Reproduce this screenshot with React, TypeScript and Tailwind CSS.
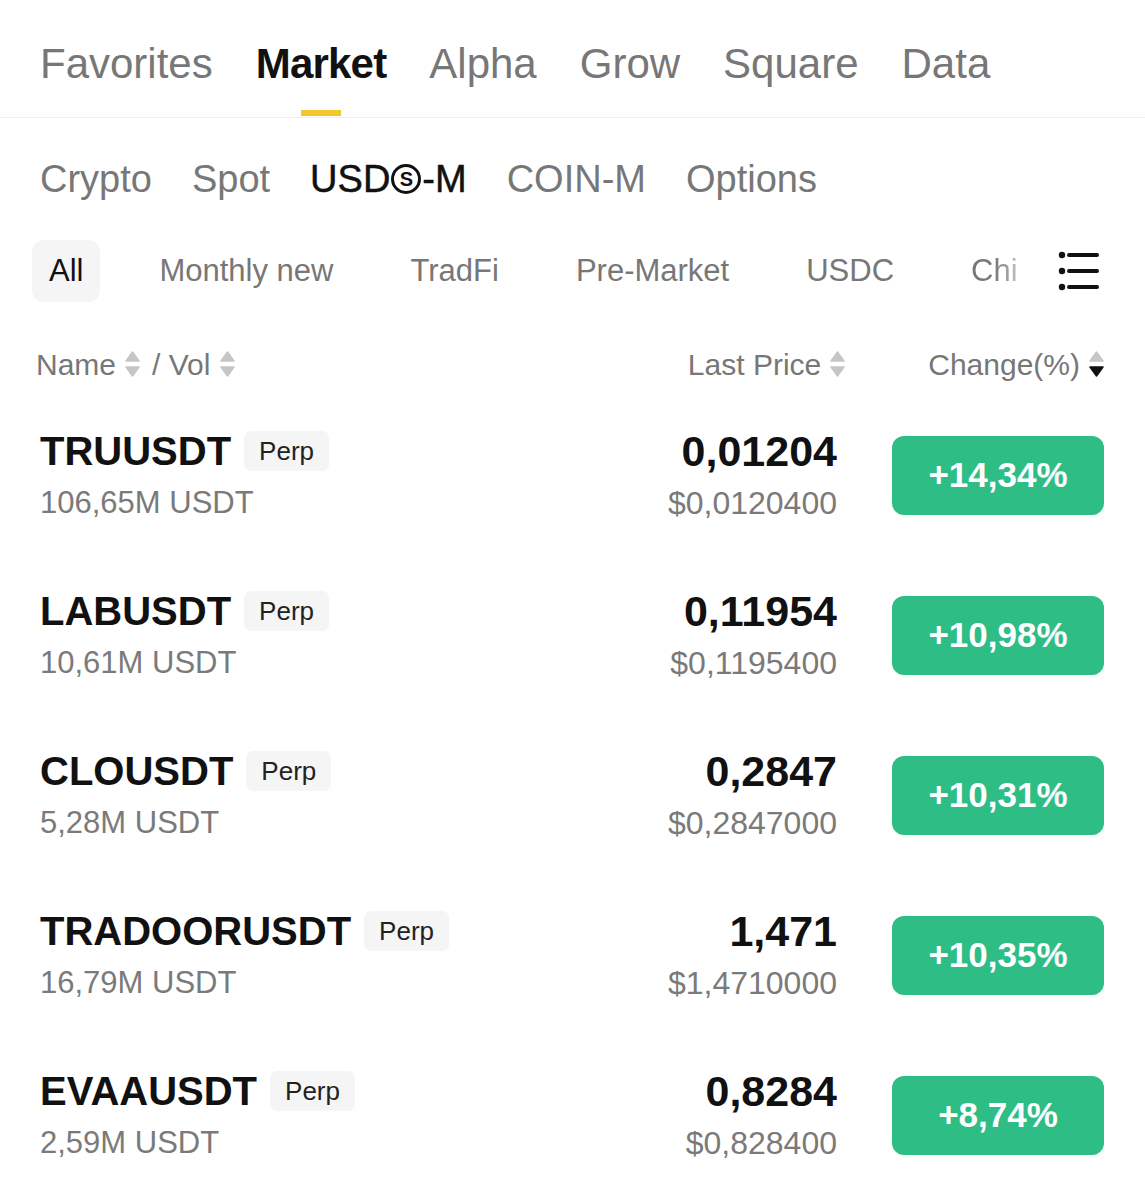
import React from 'react';

const topTabs = ['Favorites', 'Market', 'Alpha', 'Grow', 'Square', 'Data'];
const filters = ['Monthly new', 'TradFi', 'Pre-Market', 'USDC'];

const rows = [
  { name: 'TRUUSDT', vol: '106,65M USDT', price: '0,01204', usd: '$0,0120400', change: '+14,34%' },
  { name: 'LABUSDT', vol: '10,61M USDT', price: '0,11954', usd: '$0,1195400', change: '+10,98%' },
  { name: 'CLOUSDT', vol: '5,28M USDT', price: '0,2847', usd: '$0,2847000', change: '+10,31%' },
  { name: 'TRADOORUSDT', vol: '16,79M USDT', price: '1,471', usd: '$1,4710000', change: '+10,35%' },
  { name: 'EVAAUSDT', vol: '2,59M USDT', price: '0,8284', usd: '$0,828400', change: '+8,74%' },
];

function SortIcon({ down = false }: { down?: boolean }) {
  return (
    <svg width="15" height="26" viewBox="0 0 15 26" className="shrink-0">
      <path d="M7.5 1 L14 10 L1 10 Z" fill="#c6c6c6" stroke="#c6c6c6" strokeWidth="1.5" strokeLinejoin="round" />
      <path d="M1 16 L14 16 L7.5 25 Z" fill={down ? '#111' : '#c6c6c6'} stroke={down ? '#111' : '#c6c6c6'} strokeWidth="1.5" strokeLinejoin="round" />
    </svg>
  );
}

export default function App() {
  return (
    <div className="w-[1145px] h-[1200px] overflow-hidden bg-white text-[#111] font-['Liberation_Sans',Arial,sans-serif]">
      {/* top tabs */}
      <div className="flex items-end gap-[43px] h-[118px] px-[40px] border-b border-[#efefef]">
        {topTabs.map((t) => {
          const active = t === 'Market';
          return (
            <div key={t} className="flex flex-col items-center">
              <span className={`text-[42px] leading-[48px] ${active ? 'text-[#111] font-bold tracking-[-0.8px]' : 'text-[#777]'}`}>{t}</span>
              <span className={`mt-[22px] mb-[1px] h-[6px] w-[40px] ${active ? 'bg-[#f0c928]' : 'bg-transparent'}`} />
            </div>
          );
        })}
      </div>

      {/* sub tabs */}
      <div className="flex items-center gap-[40px] px-[40px] mt-[39px] h-[44px] text-[38px] leading-[44px]">
        <span className="text-[#777]">Crypto</span>
        <span className="text-[#777]">Spot</span>
        <span className="flex items-center text-[#111] [-webkit-text-stroke:0.5px_#111]">
          USD
          <span className="mx-[1px] inline-flex items-center justify-center w-[30px] h-[30px] rounded-full border-[3px] border-[#111] text-[20px] font-bold leading-none [-webkit-text-stroke:0]">
            S
          </span>
          -M
        </span>
        <span className="text-[#777]">COIN-M</span>
        <span className="text-[#777]">Options</span>
      </div>

      {/* filter chips */}
      <div className="flex items-center mt-[39px] h-[62px] pl-[32px] pr-[45px]">
        <div className="flex flex-1 items-center gap-[41px] overflow-hidden text-[31px]">
          <span className="flex items-center h-[62px] px-[17px] rounded-[12px] bg-[#f5f5f5] text-[#111]">All</span>
          {filters.map((f) => (
            <span key={f} className="px-[18px] text-[#777] whitespace-nowrap">{f}</span>
          ))}
          <span className="px-[18px] whitespace-nowrap text-transparent bg-clip-text bg-[linear-gradient(90deg,#777_0%,#777_50%,#ffffff_100%)]">
            Chi
          </span>
        </div>
        <svg width="42" height="40" viewBox="0 0 42 40" className="shrink-0">
          <circle cx="4" cy="4" r="3.2" fill="#111" />
          <circle cx="4" cy="20" r="3.2" fill="#111" />
          <circle cx="4" cy="36" r="3.2" fill="#111" />
          <path d="M11 4 H39 M11 20 H39 M11 36 H39" stroke="#111" strokeWidth="4" strokeLinecap="round" />
        </svg>
      </div>

      {/* column header */}
      <div className="flex items-center mt-[44px] h-[36px] pl-[36px] pr-[41px] text-[30px] text-[#777]">
        <div className="flex flex-1 items-center">
          <span>Name</span>
          <span className="ml-[9px]"><SortIcon /></span>
          <span className="ml-[12px]">/ Vol</span>
          <span className="ml-[10px]"><SortIcon /></span>
        </div>
        <div className="flex items-center gap-[9px]">
          <span>Last Price</span>
          <SortIcon />
        </div>
        <div className="flex items-center gap-[9px] ml-[83px]">
          <span>Change(%)</span>
          <SortIcon down />
        </div>
      </div>

      {/* rows */}
      <div className="mt-[13px] pl-[40px] pr-[41px]">
        {rows.map((r) => (
          <div key={r.name} className="flex items-center h-[160px]">
            <div className="flex-1 flex flex-col">
              <div className="flex items-center h-[44px]">
                <span className="text-[40px] font-bold leading-[44px]">{r.name}</span>
                <span className="ml-[13px] flex items-center h-[40px] px-[15px] rounded-[7px] bg-[#f5f5f5] text-[26px] text-[#222]">
                  Perp
                </span>
              </div>
              <span className="mt-[12px] text-[31px] leading-[36px] text-[#7a7a7a]">{r.vol}</span>
            </div>
            <div className="flex flex-col items-end">
              <span className="text-[43px] font-bold leading-[44px]">{r.price}</span>
              <span className="mt-[12px] text-[32px] leading-[36px] text-[#7a7a7a]">{r.usd}</span>
            </div>
            <div className="ml-[55px] flex items-center justify-center w-[212px] h-[79px] rounded-[12px] bg-[#2ebd85] text-white text-[35px] font-bold">
              {r.change}
            </div>
          </div>
        ))}
      </div>
    </div>
  );
}
